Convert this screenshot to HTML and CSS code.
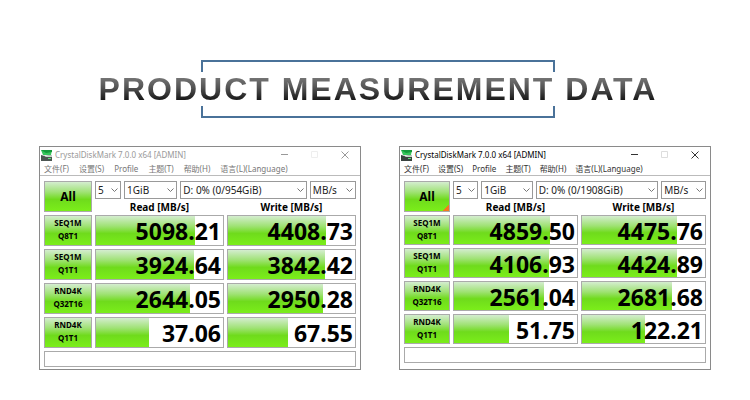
FILE: index.html
```
<!DOCTYPE html>
<html lang="en">
<head>
  <meta charset="utf-8">
  <meta name="viewport" content="width=device-width, initial-scale=1.0">
  <title>Product Measurement Data</title>
  <link rel="stylesheet" href="styles.css">
</head>
<body>
  <header class="heading">
    <div class="bracket bracket-top"></div>
    <h1>PRODUCT MEASUREMENT DATA</h1>
    <div class="bracket bracket-bottom"></div>
  </header>

  <main class="windows">
    <section class="window inactive">
      <div class="titlebar">
        <svg class="app-icon" viewBox="0 0 12 12" aria-hidden="true">
          <path d="M1 1h11l-1 5H3z" fill="#35c65a"/>
          <path d="M1 1l5 3 6-1V1z" fill="#149a3c"/>
          <path d="M1 6l4 1 7-1v6H1z" fill="#4c5552"/>
          <path d="M1 5l5 2 6-1v2H6z" fill="#c9d6cd"/>
          <path d="M8 9h3v1H8z" fill="#5be07a"/>
        </svg>
        <span class="caption">CrystalDiskMark 7.0.0 x64 [ADMIN]</span>
        <button class="win-btn" aria-label="Minimize"><svg viewBox="0 0 8 8"><path d="M0 3.500h7"/></svg></button>
        <button class="win-btn" aria-label="Maximize" disabled><svg viewBox="0 0 8 8"><path d="M.5.5h6v6h-6z"/></svg></button>
        <button class="win-btn" aria-label="Close"><svg viewBox="0 0 8 8"><path d="M.5.5l7 7M7.500.5l-7 7"/></svg></button>
      </div>
      <nav class="menu">
        <a href="#">文件(F)</a>
        <a href="#">设置(S)</a>
        <a href="#">Profile</a>
        <a href="#">主题(T)</a>
        <a href="#">帮助(H)</a>
        <a href="#">语言(L)(Language)</a>
      </nav>
      <table class="results">
        <tr class="tools">
          <td class="label-col" rowspan="2"><button class="green all">All</button></td>
          <td colspan="2">
            <div class="toolbar">
              <select aria-label="Test count"><option>5</option></select>
              <select aria-label="Test size"><option>1GiB</option></select>
              <select aria-label="Drive"><option>D: 0% (0/954GiB)</option></select>
              <select aria-label="Unit"><option>MB/s</option></select>
            </div>
          </td>
        </tr>
        <tr class="heads"><th>Read [MB/s]</th><th>Write [MB/s]</th></tr>
        <tr>
          <td><button class="green">SEQ1M<br>Q8T1</button></td>
          <td><div class="meter"><i style="width:78%"></i><b>5098.21</b></div></td>
          <td><div class="meter"><i style="width:77%"></i><b>4408.73</b></div></td>
        </tr>
        <tr>
          <td><button class="green">SEQ1M<br>Q1T1</button></td>
          <td><div class="meter"><i style="width:77%"></i><b>3924.64</b></div></td>
          <td><div class="meter"><i style="width:76%"></i><b>3842.42</b></div></td>
        </tr>
        <tr>
          <td><button class="green">RND4K<br>Q32T16</button></td>
          <td><div class="meter"><i style="width:74%"></i><b>2644.05</b></div></td>
          <td><div class="meter"><i style="width:75%"></i><b>2950.28</b></div></td>
        </tr>
        <tr>
          <td><button class="green">RND4K<br>Q1T1</button></td>
          <td><div class="meter"><i style="width:42%"></i><b>37.06</b></div></td>
          <td><div class="meter"><i style="width:47%"></i><b>67.55</b></div></td>
        </tr>
      </table>
      <input class="comment" type="text" aria-label="Comment">
    </section>

    <section class="window compact">
      <div class="titlebar">
        <svg class="app-icon" viewBox="0 0 12 12" aria-hidden="true">
          <path d="M1 1h11l-1 5H3z" fill="#35c65a"/>
          <path d="M1 1l5 3 6-1V1z" fill="#149a3c"/>
          <path d="M1 6l4 1 7-1v6H1z" fill="#39423f"/>
          <path d="M1 5l5 2 6-1v2H6z" fill="#c9d6cd"/>
          <path d="M8 9h3v1H8z" fill="#5be07a"/>
        </svg>
        <span class="caption">CrystalDiskMark 7.0.0 x64 [ADMIN]</span>
        <button class="win-btn" aria-label="Minimize"><svg viewBox="0 0 8 8"><path d="M0 3.500h7"/></svg></button>
        <button class="win-btn" aria-label="Maximize" disabled><svg viewBox="0 0 8 8"><path d="M.5.5h6v6h-6z"/></svg></button>
        <button class="win-btn" aria-label="Close"><svg viewBox="0 0 8 8"><path d="M.5.5l7 7M7.500.5l-7 7"/></svg></button>
      </div>
      <nav class="menu">
        <a href="#">文件(F)</a>
        <a href="#">设置(S)</a>
        <a href="#">Profile</a>
        <a href="#">主题(T)</a>
        <a href="#">帮助(H)</a>
        <a href="#">语言(L)(Language)</a>
      </nav>
      <table class="results">
        <tr class="tools">
          <td class="label-col" rowspan="2"><button class="green all marked">All</button></td>
          <td colspan="2">
            <div class="toolbar">
              <select aria-label="Test count"><option>5</option></select>
              <select aria-label="Test size"><option>1GiB</option></select>
              <select aria-label="Drive"><option>D: 0% (0/1908GiB)</option></select>
              <select aria-label="Unit"><option>MB/s</option></select>
            </div>
          </td>
        </tr>
        <tr class="heads"><th>Read [MB/s]</th><th>Write [MB/s]</th></tr>
        <tr>
          <td><button class="green">SEQ1M<br>Q8T1</button></td>
          <td><div class="meter"><i style="width:78%"></i><b>4859.50</b></div></td>
          <td><div class="meter"><i style="width:77%"></i><b>4475.76</b></div></td>
        </tr>
        <tr>
          <td><button class="green">SEQ1M<br>Q1T1</button></td>
          <td><div class="meter"><i style="width:77%"></i><b>4106.93</b></div></td>
          <td><div class="meter"><i style="width:77%"></i><b>4424.89</b></div></td>
        </tr>
        <tr>
          <td><button class="green">RND4K<br>Q32T16</button></td>
          <td><div class="meter"><i style="width:73%"></i><b>2561.04</b></div></td>
          <td><div class="meter"><i style="width:73%"></i><b>2681.68</b></div></td>
        </tr>
        <tr>
          <td><button class="green">RND4K<br>Q1T1</button></td>
          <td><div class="meter"><i style="width:45%"></i><b>51.75</b></div></td>
          <td><div class="meter"><i style="width:51%"></i><b>122.21</b></div></td>
        </tr>
      </table>
      <input class="comment" type="text" aria-label="Comment">
    </section>
  </main>
</body>
</html>
```
FILE: styles.css
```
* {
  box-sizing: border-box;
  margin: 0;
  padding: 0;
}

body {
  background: #fff;
  color: #000;
  font-family: "Noto Sans", "Noto Sans CJK SC", sans-serif;
}

/* heading */
.heading {
  display: flex;
  flex-direction: column;
  align-items: center;
  padding: 60px 0 0 6px;
}
.heading h1 {
  font: bold 32px/34px "Liberation Sans", Arial, sans-serif;
  letter-spacing: 2px;
  white-space: nowrap;
  background: linear-gradient(#777 15%, #555 45%, #0c0c0c 90%);
  -webkit-background-clip: text;
  background-clip: text;
  color: transparent;
}
.bracket {
  width: 354px;
  height: 12px;
  border: 2px solid #4a7299;
}
.bracket-top {
  border-bottom: 0;
}
.bracket-bottom {
  border-top: 0;
}

/* windows */
.windows {
  display: grid;
  grid-template-columns: 322fr 312fr;
  gap: 38px;
  padding: 28px 39px 0;
}
.window {
  border: 1px solid #8a8a8a;
  min-width: 0;
}
.titlebar {
  display: flex;
  align-items: center;
  height: 15px;
}
.app-icon {
  width: 12px;
  height: 12px;
  flex: none;
}
.caption {
  flex: 1;
  padding-left: 3px;
  font-size: 8px;
  line-height: 14px;
  white-space: nowrap;
}
.win-btn {
  display: flex;
  justify-content: center;
  width: 30px;
  border: 0;
  background: none;
}
.win-btn svg {
  width: 8px;
  height: 8px;
  fill: none;
  stroke: #333;
}
.win-btn:disabled svg {
  stroke: #ddd;
}

.menu {
  display: flex;
  gap: 9px;
  height: 14px;
  padding-left: 4px;
  border-bottom: 1px solid #bbb;
  font-size: 8px;
  line-height: 13px;
  white-space: nowrap;
}
.menu a {
  color: #333;
  text-decoration: none;
}
.inactive .menu {
  gap: 10px;
}
.inactive .caption {
  color: #999;
}
.inactive .menu a {
  color: #777;
}
.inactive .win-btn svg {
  stroke: #999;
}
.inactive .win-btn:disabled svg {
  stroke: #eee;
}

/* results */
.results {
  width: 100%;
  padding: 2px 1px 0;
  table-layout: fixed;
  border-collapse: separate;
  border-spacing: 3px;
}
.label-col {
  width: 48px;
}
.compact .label-col {
  width: 46px;
}
.tools {
  height: 18px;
}
.heads th {
  height: 10px;
  font-size: 10px;
  line-height: 10px;
}
.toolbar {
  display: grid;
  grid-template-columns: 26fr 53fr 126fr 46fr;
  gap: 3px;
}
.toolbar select {
  min-width: 0;
  height: 18px;
  padding-left: 2px;
  appearance: none;
  border: 1px solid #999;
  border-radius: 0;
  color: #222;
  font: 10px/16px "Noto Sans", sans-serif;
  background: #fff url("data:image/svg+xml,%3Csvg xmlns='http://www.w3.org/2000/svg' width='7' height='5'%3E%3Cpath d='M.5.5l3 3 3-3' fill='none' stroke='%23777'/%3E%3C/svg%3E") no-repeat right 2px center;
}

.green,
.meter {
  display: block;
  width: 100%;
  height: 31px;
  border: 1px solid #aaa;
}
.green,
.meter i {
  background: linear-gradient(#d4edcf, #9fe274 35%, #6fdb1c 60%, #7bee1a);
}
.green {
  padding-bottom: 3px;
  font: bold 8px/13px "Noto Sans", sans-serif;
}
.green.all {
  padding-bottom: 0;
  font-size: 12px;
}
.marked {
  background: linear-gradient(135deg, transparent 50%, #f47a20 50%) no-repeat right bottom / 6px 6px,
    linear-gradient(#d4edcf, #9fe274 35%, #6fdb1c 60%, #7bee1a);
}
.meter {
  display: grid;
  grid-template-rows: 100%;
}
.meter i,
.meter b {
  grid-area: 1 / 1;
}
.meter b {
  padding-right: 2px;
  font-size: 23px;
  line-height: 31px;
  text-align: right;
}
.compact .green:not(.all),
.compact .meter {
  height: 30px;
}
.compact .meter b {
  line-height: 30px;
}

.comment {
  display: block;
  width: calc(100% - 8px);
  height: 16px;
  margin: 0 4px 2px;
  border: 1px solid #aaa;
}
```
